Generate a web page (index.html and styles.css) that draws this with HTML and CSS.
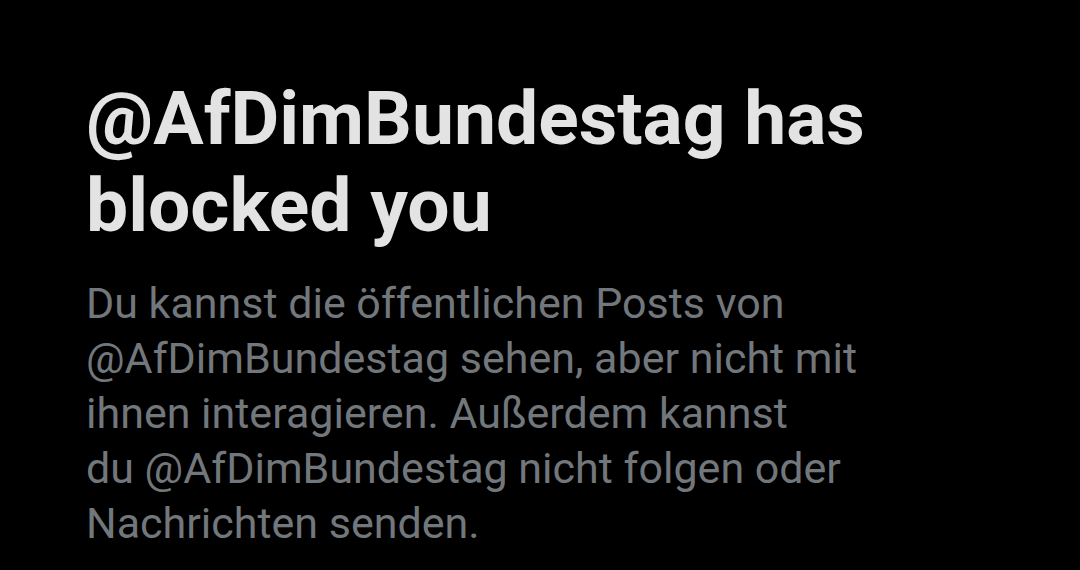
FILE: index.html
```html
<!doctype html>
<html lang="en">
  <head>
    <meta charset="UTF-8" />
    <meta name="viewport" content="width=device-width, initial-scale=1.0" />
    <title>Blocked</title>
    <link rel="stylesheet" href="styles.css">
  </head>
  <body>
    <div class="blocked">
      <h1>@AfDimBundestag has<br />blocked you</h1>
      <p>
        Du kannst die öffentlichen Posts von<br />
        @AfDimBundestag sehen, aber nicht mit<br />
        ihnen interagieren. Außerdem kannst<br />
        du @AfDimBundestag nicht folgen oder<br />
        Nachrichten senden.
      </p>
    </div>
  </body>
</html>
```

FILE: styles.css
```css
* {
  margin: 0;
  padding: 0;
  box-sizing: border-box;
}

body {
  font-family: Roboto, 'Noto Sans', sans-serif;
  background-color: #000;
  min-height: 100vh;
}

.blocked {
  padding: 75px 40px 0 86px;
}

h1 {
  font-size: 75px;
  font-weight: 700;
  line-height: 87px;
  color: #e3e3e3;
  margin-bottom: 27px;
}

p {
  font-size: 43px;
  line-height: 55px;
  color: #72777c;
}
```
